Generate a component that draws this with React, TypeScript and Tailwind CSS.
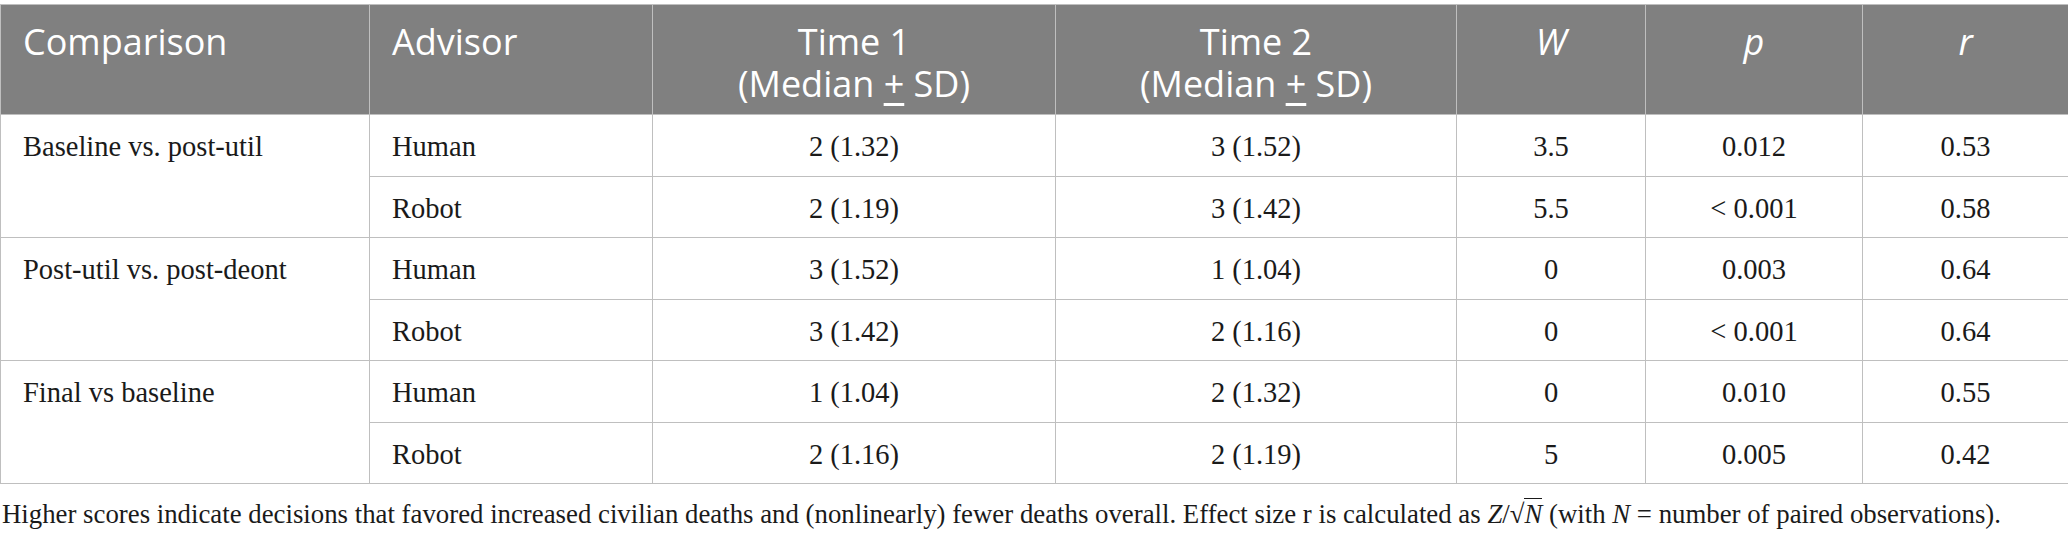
type Row = {
  advisor: string;
  t1: string;
  t2: string;
  w: string;
  p: string;
  r: string;
};

type Group = {
  comparison: string;
  rows: Row[];
};

const groups: Group[] = [
  {
    comparison: 'Baseline vs. post-util',
    rows: [
      { advisor: 'Human', t1: '2 (1.32)', t2: '3 (1.52)', w: '3.5', p: '0.012', r: '0.53' },
      { advisor: 'Robot', t1: '2 (1.19)', t2: '3 (1.42)', w: '5.5', p: '< 0.001', r: '0.58' },
    ],
  },
  {
    comparison: 'Post-util vs. post-deont',
    rows: [
      { advisor: 'Human', t1: '3 (1.52)', t2: '1 (1.04)', w: '0', p: '0.003', r: '0.64' },
      { advisor: 'Robot', t1: '3 (1.42)', t2: '2 (1.16)', w: '0', p: '< 0.001', r: '0.64' },
    ],
  },
  {
    comparison: 'Final vs baseline',
    rows: [
      { advisor: 'Human', t1: '1 (1.04)', t2: '2 (1.32)', w: '0', p: '0.010', r: '0.55' },
      { advisor: 'Robot', t1: '2 (1.16)', t2: '2 (1.19)', w: '5', p: '0.005', r: '0.42' },
    ],
  },
];

const th =
  'h-[110px] border border-[#bfbfbf] px-[22px] pt-[16px] align-top text-[36px] font-normal leading-[42px] text-white';
const td = 'h-[61.5px] border border-[#bfbfbf] px-[22px] pt-[12px] align-top leading-[40px]';

export default function App() {
  return (
    <div className="w-[2068px] bg-white pt-[4px] font-['Liberation_Serif',serif] text-[#1a1a1a]">
      <table className="w-full table-fixed border-collapse">
        <colgroup>
          <col className="w-[369px]" />
          <col className="w-[283px]" />
          <col className="w-[403px]" />
          <col className="w-[401px]" />
          <col className="w-[189px]" />
          <col className="w-[217px]" />
          <col className="w-[206px]" />
        </colgroup>
        <thead className="bg-[#808080] font-['Open_Sans',sans-serif]">
          <tr>
            <th className={`${th} text-left`}>Comparison</th>
            <th className={`${th} text-left`}>Advisor</th>
            <th className={`${th} text-center`}>
              Time 1
              <br />
              (Median <span className="underline underline-offset-[6px]">+</span> SD)
            </th>
            <th className={`${th} text-center`}>
              Time 2
              <br />
              (Median <span className="underline underline-offset-[6px]">+</span> SD)
            </th>
            <th className={`${th} text-center italic`}>W</th>
            <th className={`${th} text-center italic`}>p</th>
            <th className={`${th} text-center italic`}>r</th>
          </tr>
        </thead>
        <tbody className="text-[28.5px]">
          {groups.map(group =>
            group.rows.map((row, i) => (
              <tr key={group.comparison + row.advisor}>
                {i === 0 && (
                  <td rowSpan={group.rows.length} className={`${td} text-left`}>
                    {group.comparison}
                  </td>
                )}
                <td className={`${td} text-left`}>{row.advisor}</td>
                <td className={`${td} text-center`}>{row.t1}</td>
                <td className={`${td} text-center`}>{row.t2}</td>
                <td className={`${td} text-center`}>{row.w}</td>
                <td className={`${td} text-center`}>{row.p}</td>
                <td className={`${td} text-center`}>{row.r}</td>
              </tr>
            )),
          )}
        </tbody>
      </table>

      {/* Footnote */}
      <p className="mt-[12px] whitespace-nowrap pl-[2px] text-[26.8px] leading-[36px]">
        Higher scores indicate decisions that favored increased civilian deaths and (nonlinearly) fewer
        deaths overall. Effect size r is calculated as <i>Z</i>/√<span className="border-t border-[#1a1a1a]"><i>N</i></span>
        {' '}(with <i>N</i> = number of paired observations).
      </p>
    </div>
  );
}
